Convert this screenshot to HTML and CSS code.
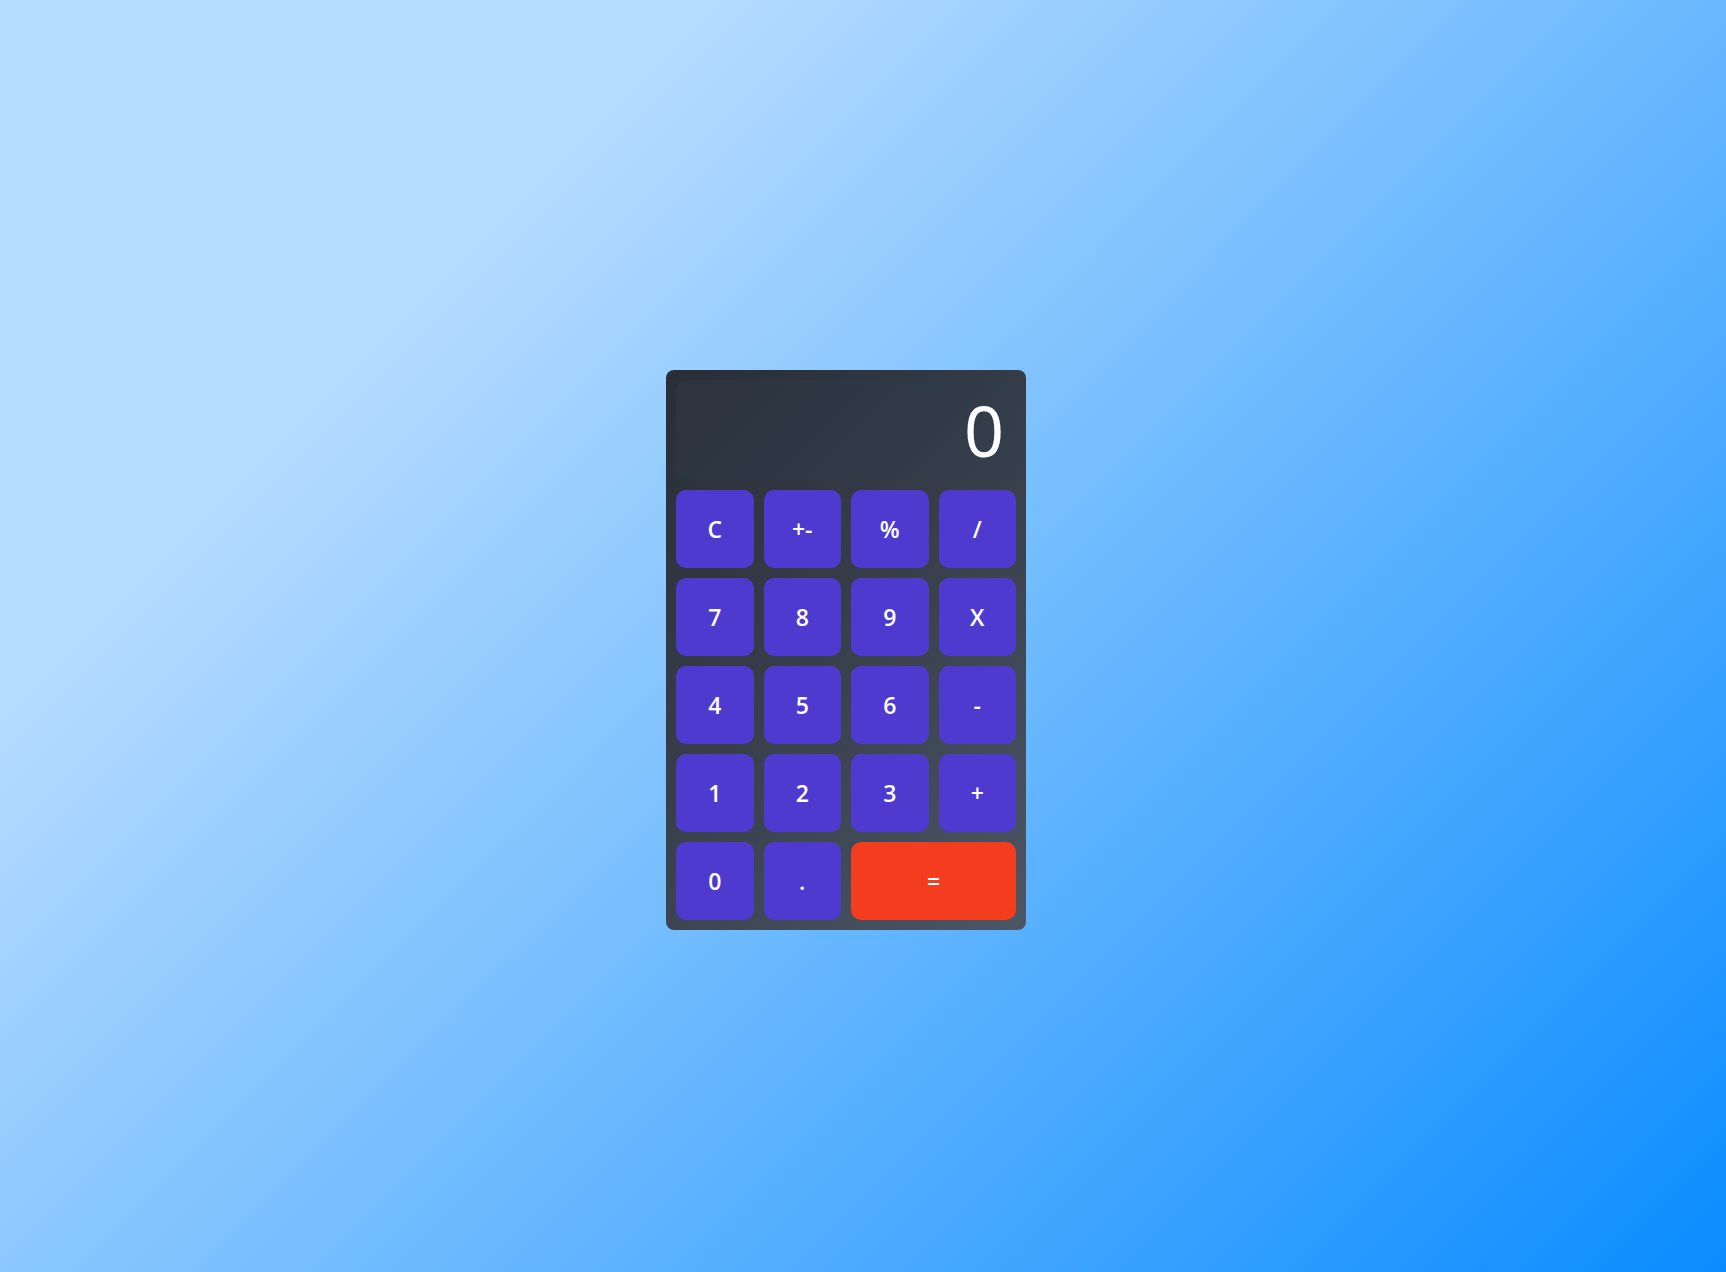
FILE: index.html
```html
<!DOCTYPE html>
<html lang="en">
<head>
<meta charset="utf-8">
<title>Calculator</title>
<link rel="stylesheet" href="styles.css">
</head>
<body>
  <div class="calculator">
    <div class="display">0</div>
    <div class="keys">
      <button class="key">C</button>
      <button class="key">+-</button>
      <button class="key">%</button>
      <button class="key">/</button>
      <button class="key">7</button>
      <button class="key">8</button>
      <button class="key">9</button>
      <button class="key">X</button>
      <button class="key">4</button>
      <button class="key">5</button>
      <button class="key">6</button>
      <button class="key">-</button>
      <button class="key">1</button>
      <button class="key">2</button>
      <button class="key">3</button>
      <button class="key">+</button>
      <button class="key">0</button>
      <button class="key">.</button>
      <button class="key key-equals">=</button>
    </div>
  </div>
</body>
</html>
```

FILE: styles.css
```css
* {
  box-sizing: border-box;
}

html, body {
  margin: 0;
  height: 100%;
}

body {
  height: 100vh;
  padding: 28px 34px 0 0;
  display: flex;
  align-items: center;
  justify-content: center;
  background: linear-gradient(135deg, #b5dbff 24%, #0a8cff 100%);
  font-family: "Open Sans", "Liberation Sans", sans-serif;
}

.calculator {
  width: 360px;
  height: 560px;
  padding: 10px;
  border-radius: 8px;
  background: linear-gradient(135deg, #282d36 0%, #3a424e 55%, #4b5666 100%);
  display: flex;
  flex-direction: column;
  gap: 10px;
}

.display {
  height: 100px;
  border-radius: 10px;
  background: linear-gradient(135deg, #2c333e 0%, #303946 60%, #363f4c 100%);
  color: #ffffff;
  font-family: "Noto Sans", "Open Sans", sans-serif;
  font-weight: 400;
  font-size: 70px;
  line-height: 100px;
  text-align: right;
  padding: 0 12px 0 10px;
}

.keys {
  display: grid;
  grid-template-columns: repeat(4, 1fr);
  grid-auto-rows: 78px;
  gap: 10px;
}

.key {
  border: none;
  border-radius: 10px;
  background: #4f3ad0;
  color: #ffffff;
  font-family: "Open Sans", "Liberation Sans", sans-serif;
  font-weight: 600;
  font-size: 23px;
  padding: 0;
  cursor: pointer;
}

.key-equals {
  grid-column: span 2;
  background: #f43c1e;
}
```
